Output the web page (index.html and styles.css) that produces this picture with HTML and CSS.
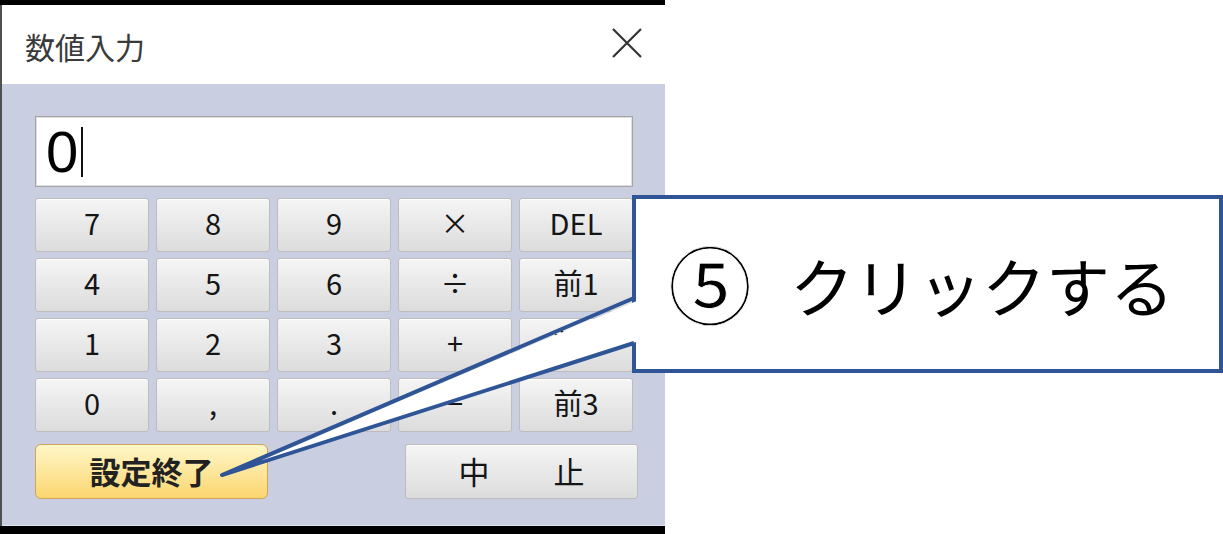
FILE: index.html
```html
<!DOCTYPE html>
<html lang="ja">
<head>
    <meta charset="UTF-8">
    <meta name="viewport" content="width=device-width, initial-scale=1.0">
    <title>数値入力</title>
    <link rel="stylesheet" href="styles.css">
</head>
<body>
    <div class="page">
        <div class="frame">
            <div class="window">
                <div class="titlebar">
                    <span class="title">数値入力</span>
                    <svg class="close" width="30" height="30" viewBox="0 0 30 30">
                        <path d="M1 1 L29 29 M29 1 L1 29" stroke="#333" stroke-width="2.2" fill="none"/>
                    </svg>
                </div>

                <div class="client">
                    <div class="display">
                        <span class="value">0</span><span class="caret"></span>
                    </div>

                    <div class="keys">
                        <button class="key">7</button>
                        <button class="key">8</button>
                        <button class="key">9</button>
                        <button class="key">×</button>
                        <button class="key">DEL</button>

                        <button class="key">4</button>
                        <button class="key">5</button>
                        <button class="key">6</button>
                        <button class="key">÷</button>
                        <button class="key">前1</button>

                        <button class="key">1</button>
                        <button class="key">2</button>
                        <button class="key">3</button>
                        <button class="key">+</button>
                        <button class="key">前2</button>

                        <button class="key">0</button>
                        <button class="key">,</button>
                        <button class="key">.</button>
                        <button class="key">−</button>
                        <button class="key">前3</button>
                    </div>

                    <div class="footer">
                        <button class="btn-ok">設定終了</button>
                        <button class="btn-cancel"><span>中</span><span>止</span></button>
                    </div>
                </div>
            </div>
        </div>

        <!-- annotation -->
        <div class="callout">
            <span class="num">⑤</span>
            <span class="label">クリックする</span>
        </div>
        <svg class="pointer" width="1223" height="534" viewBox="0 0 1223 534">
            <polygon points="639,300 222,475 639,341" fill="#fff"/>
            <polyline points="634,298 222,475 634,343" fill="none" stroke="#2f5597" stroke-width="4" stroke-linejoin="round"/>
        </svg>
    </div>
</body>
</html>
```

FILE: styles.css
```css
body {
    margin: 0;
    background-color: #fff;
    font-family: "Noto Sans CJK JP", "Noto Sans", sans-serif;
}
.page {
    position: relative;
    width: 1223px;
    height: 534px;
    display: flex;
}
.frame {
    width: 665px;
    height: 534px;
    padding-top: 5px;
    box-sizing: border-box;
    background-color: #000;
}
.window {
    height: 521px;
    display: flex;
    flex-direction: column;
    border-left: 2px solid #505050;
    background-color: #c9cfe1;
}
.titlebar {
    height: 79px;
    flex: none;
    display: flex;
    align-items: center;
    justify-content: space-between;
    padding: 0 23px;
    background-color: #fff;
}
.title {
    font-size: 30px;
    line-height: 1;
    color: #3a3a3a;
    margin-top: 2px;
}
.close {
    margin-top: -3px;
}
.client {
    flex: 1;
    padding: 32px 0 0 33px;
    border-bottom: 1px solid #e2e5ef;
}
.display {
    width: 598px;
    height: 71px;
    box-sizing: border-box;
    display: flex;
    align-items: center;
    padding-left: 10px;
    background-color: #fff;
    border: 1px solid #a5a5a5;
    box-shadow: inset 0 0 0 1px #dedede;
}
.value {
    font-family: "Liberation Sans", Arial, sans-serif;
    font-size: 58px;
    line-height: 1;
    color: #000;
}
.caret {
    width: 2px;
    height: 50px;
    margin-left: 3px;
    background-color: #111;
}
.keys {
    display: grid;
    grid-template-columns: repeat(5, 114px);
    grid-auto-rows: 54px;
    gap: 6px 7px;
    margin-top: 11px;
}
button {
    font-family: "Noto Sans CJK JP", "Noto Sans", sans-serif;
    color: #151515;
    padding: 0;
    cursor: pointer;
}
.key {
    font-size: 29px;
    line-height: 1;
    padding-bottom: 6px;
    background: linear-gradient(#f5f5f5, #dcdcdc);
    border: 1px solid #bdbdbd;
    border-radius: 3px;
    box-shadow: inset 0 1px 0 #fff;
}
.footer {
    width: 603px;
    display: flex;
    justify-content: space-between;
    margin-top: 12px;
}
.btn-ok,
.btn-cancel {
    width: 233px;
    height: 55px;
    font-size: 31px;
    line-height: 1;
    padding-bottom: 3px;
}
.btn-ok {
    font-weight: bold;
    color: #222;
    background: linear-gradient(#fff7c8, #fbd670);
    border: 1px solid #d2a25a;
    border-radius: 6px;
}
.btn-cancel {
    display: flex;
    align-items: center;
    justify-content: center;
    gap: 64px;
    background: linear-gradient(#f5f5f5, #dcdcdc);
    border: 1px solid #bdbdbd;
    border-radius: 3px;
    box-shadow: inset 0 1px 0 #fff;
}
.callout {
    position: absolute;
    left: 632px;
    top: 195px;
    width: 591px;
    height: 178px;
    box-sizing: border-box;
    display: flex;
    align-items: center;
    padding-left: 32px;
    background-color: #fff;
    border: 4px solid #2f5597;
    color: #000;
    z-index: 2;
}
.num {
    font-size: 84px;
    line-height: 1;
    margin-top: -4px;
    -webkit-text-stroke: 0.8px #fff;
}
.label {
    font-size: 64px;
    line-height: 1;
    margin-left: 38px;
}
.pointer {
    position: absolute;
    left: 0;
    top: 0;
    z-index: 3;
    pointer-events: none;
}
```
